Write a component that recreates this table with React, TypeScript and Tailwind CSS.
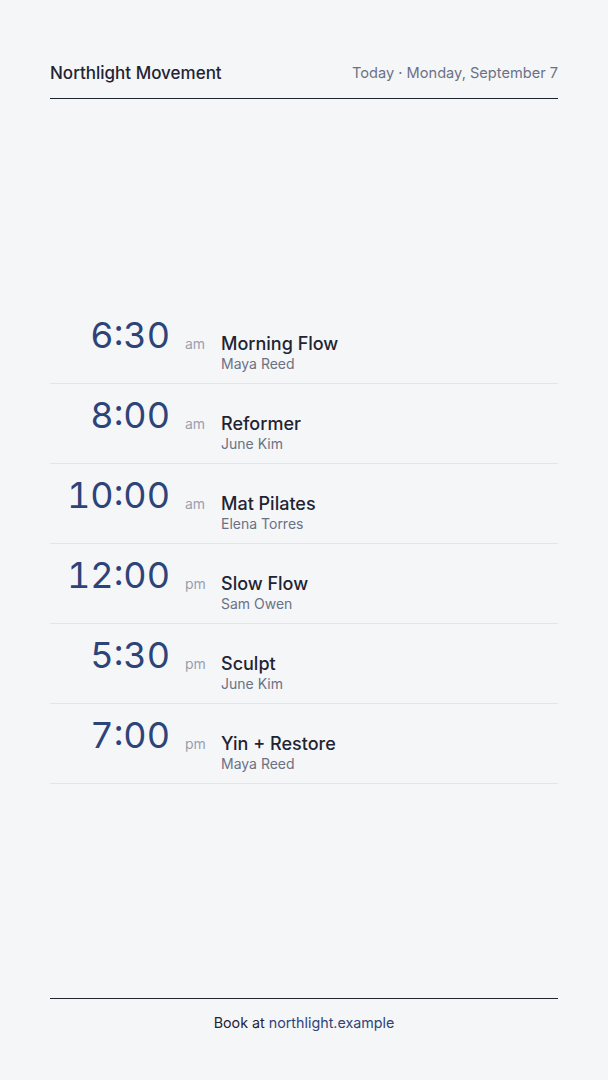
const classes = [
  { time: "6:30", period: "am", name: "Morning Flow", teacher: "Maya Reed" },
  { time: "8:00", period: "am", name: "Reformer", teacher: "June Kim" },
  { time: "10:00", period: "am", name: "Mat Pilates", teacher: "Elena Torres" },
  { time: "12:00", period: "pm", name: "Slow Flow", teacher: "Sam Owen" },
  { time: "5:30", period: "pm", name: "Sculpt", teacher: "June Kim" },
  { time: "7:00", period: "pm", name: "Yin + Restore", teacher: "Maya Reed" },
];

export default function App() {
  return (
    <div className="min-h-screen bg-[#f5f6f8] px-[50px] flex flex-col font-['Inter',sans-serif] text-[#1f2433]">
      <header className="pt-[61px] pb-[13px] border-b border-[#1f2433] flex items-center justify-between">
        <h1 className="text-[17px] leading-6 font-medium">Northlight Movement</h1>
        <span className="text-[14.6px] leading-6 text-[#6b7185]">Today · Monday, September 7</span>
      </header>

      <main className="flex-1 flex flex-col justify-center">
        <ul className="mb-[10px]">
          {classes.map((c) => (
            <li key={c.time} className="h-[80px] border-b border-[#e2e4e8] flex items-start">
              <span className="w-[120px] pt-[9px] text-right text-[36px] leading-[44px] tabular-nums text-[#2d4479]">
                {c.time}
              </span>
              <span className="w-[51px] pt-[30px] pl-[15px] text-[14px] leading-5 text-[#9a9fae]">
                {c.period}
              </span>
              <div className="flex flex-col pt-[30px]">
                <span className="text-[18px] leading-5 font-medium text-[#1f2433]">{c.name}</span>
                <span className="text-[14px] leading-5 text-[#6b7185]">{c.teacher}</span>
              </div>
            </li>
          ))}
        </ul>
      </main>

      <footer className="border-t border-[#1f2433] pt-[14px] pb-[47px] text-center text-[14.3px] leading-5">
        Book at <span className="text-[#2d4479]">northlight.example</span>
      </footer>
    </div>
  );
}
